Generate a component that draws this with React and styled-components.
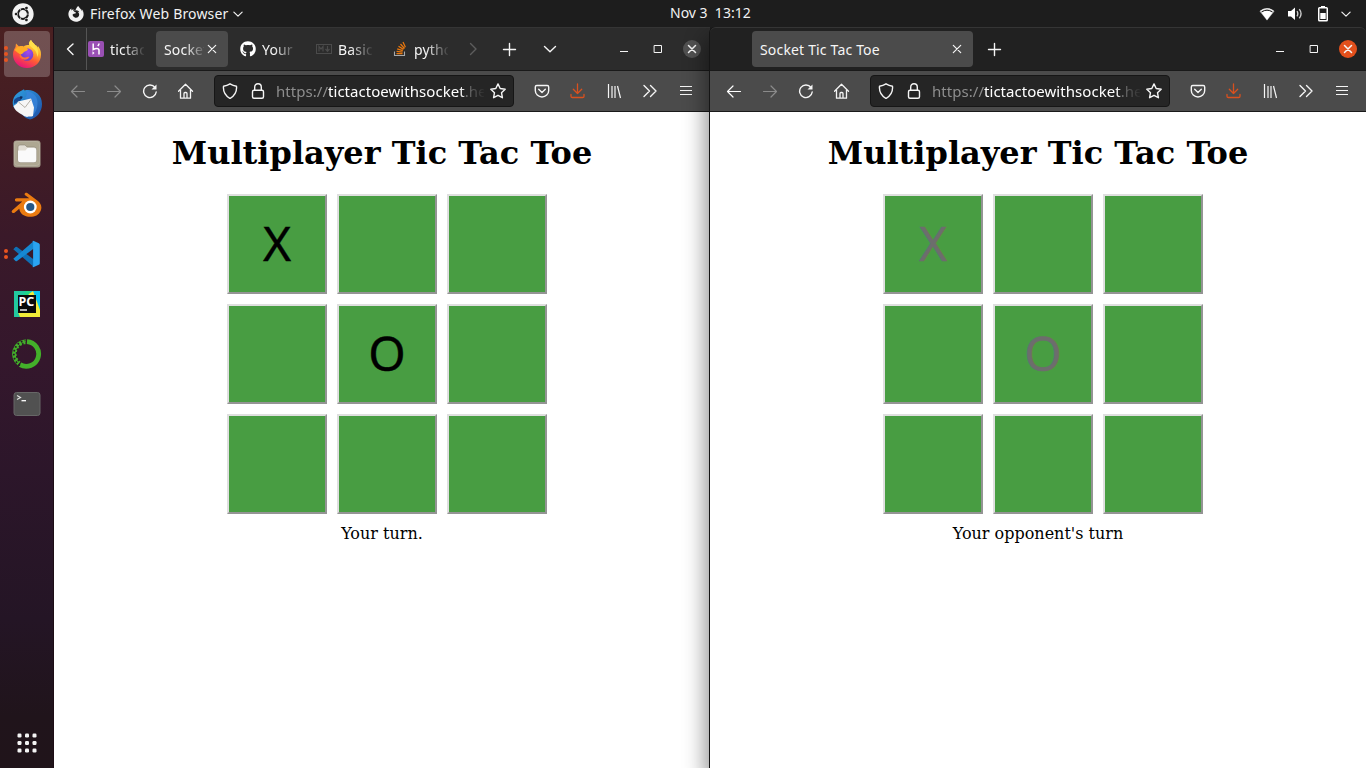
import React from 'react';
import styled, { createGlobalStyle } from 'styled-components';
import { FaGithub, FaUbuntu, FaFirefoxBrowser } from 'react-icons/fa';

const GlobalStyle = createGlobalStyle`
  * { box-sizing: border-box; }
  body { margin: 0; background: #fff; overflow: hidden; }
  svg { display: block; flex: none; }
`;

const ui = '"Noto Sans", "Open Sans", sans-serif';

const Desktop = styled.div`
  width: 1366px;
  height: 768px;
  display: flex;
  flex-direction: column;
  overflow: hidden;
  font-family: ${ui};
  color: #fff;
`;

const TopBar = styled.header`
  height: 27px;
  flex: none;
  display: grid;
  grid-template-columns: 658px auto 1fr;
  align-items: center;
  padding: 0 14px 0 12px;
  background: #1d1d1d;
  color: #f2f2f2;
`;

const TopGroup = styled.div`
  display: flex;
  align-items: center;
  justify-content: ${p => (p.$end ? 'flex-end' : 'flex-start')};
`;

const AppMenu = styled.div`
  display: flex;
  align-items: center;
  margin-left: 34px;
`;

const Label = styled.span`
  font-size: ${p => p.$size || 14}px;
  letter-spacing: ${p => p.$track || 0}px;
  line-height: 20px;
  white-space: pre;
`;

const Clock = styled(Label)`
  margin-top: -2px;
`;

const Gap = styled.span`
  width: ${p => p.$w}px;
  flex: none;
`;

const Main = styled.div`
  flex: 1;
  display: flex;
  min-height: 0;
  background: #1d1d1d;
`;

const Dock = styled.nav`
  width: 54px;
  flex: none;
  display: flex;
  flex-direction: column;
  align-items: center;
  gap: 4px;
  padding: 4px 0 2px;
  border-right: 1px solid #1c0d15;
  background: linear-gradient(180deg, #4a2021 0%, #441d23 12%, #3a1929 28%, #34172c 45%, #2c162a 60%, #241525 80%, #20141b 93%, #20141a 100%);
`;

const DockItem = styled.div`
  position: relative;
  width: 46px;
  height: 46px;
  margin-left: 1px;
  display: flex;
  align-items: center;
  justify-content: center;
  border-radius: 4px;
  background: ${p => (p.$active ? 'rgba(255,255,255,0.22)' : 'transparent')};
  ${p => p.$last && 'margin-top: auto;'}
`;

const RunningDots = styled.div`
  position: absolute;
  left: 0;
  top: 0;
  height: 46px;
  width: 4px;
  display: flex;
  flex-direction: column;
  align-items: center;
  justify-content: center;
  gap: 2px;

  i {
    width: 4px;
    height: 4px;
    border-radius: 50%;
    background: #e95420;
  }
`;

const Window = styled.section`
  width: 656px;
  flex: none;
  display: flex;
  flex-direction: column;
  background: ${p => (p.$front ? 'transparent' : '#fff')};
  position: relative;
  ${p => p.$front && 'border-radius: 6px 6px 0 0; box-shadow: -1px 0 0 #151515, -2px 12px 22px 2px rgba(0,0,0,0.45);'}
  clip-path: inset(0 0 0 -40px);
`;

const TabStrip = styled.div`
  height: 44px;
  flex: none;
  display: flex;
  align-items: center;
  background: ${p => (p.$front ? '#212121' : '#2c2c2c')};
  border-top: 1px solid #353535;
  border-bottom: 1px solid #1a1a1a;
  border-radius: ${p => (p.$front ? '6px 6px 0 0' : '0')};
`;

const Slot = styled.div`
  width: ${p => p.$w || 36}px;
  height: 30px;
  flex: none;
  display: flex;
  align-items: center;
  justify-content: center;
  color: ${p => p.$color || '#f5f5f5'};
`;

const TabList = styled.div`
  width: ${p => p.$w}px;
  height: 100%;
  flex: none;
  display: flex;
  align-items: center;
  overflow: hidden;
  border-left: ${p => (p.$scrolled ? '1px solid #555' : 'none')};
`;

const Tab = styled.div`
  width: ${p => p.$w || 72}px;
  height: 36px;
  margin-right: 4px;
  margin-left: ${p => (p.$cut ? -7 : 0)}px;
  padding: 0 8px;
  flex: none;
  display: flex;
  align-items: center;
  border-radius: 4px;
  background: ${p => (p.$active ? '#4b4b4b' : 'transparent')};
`;

const TabIcon = styled.span`
  width: 16px;
  height: 16px;
  margin-right: 6px;
  flex: none;
  display: flex;
  align-items: center;
  justify-content: center;
`;

const TabText = styled.span`
  flex: 1;
  min-width: 0;
  white-space: nowrap;
  font-size: 14px;
  line-height: 22px;
  padding-top: 2px;
  letter-spacing: 0.17px;
  color: #f6f6f6;
  ${p => p.$fade && `mask-image: linear-gradient(90deg, #000 ${p.$fade}, transparent 105%);`}
`;

const Controls = styled.div`
  display: flex;
  margin-left: auto;
  margin-right: 1px;
`;

const CloseButton = styled.div`
  width: 18px;
  height: 18px;
  border-radius: 50%;
  display: flex;
  align-items: center;
  justify-content: center;
  background: ${p => (p.$front ? '#e2501c' : '#515151')};
`;

const Toolbar = styled.div`
  height: 41px;
  flex: none;
  display: flex;
  align-items: center;
  padding: 0 6px;
  background: #4b4b4b;
  border-bottom: 1px solid #1a1a1a;
`;

const UrlBar = styled.div`
  width: 300px;
  height: 32px;
  margin: 0 10px;
  padding: 0 1px;
  flex: none;
  display: flex;
  align-items: center;
  border: 1px solid #161616;
  border-radius: 4px;
  background: #252525;
`;

const Url = styled.div`
  flex: 1;
  min-width: 0;
  margin-left: 4px;
  white-space: nowrap;
  font-size: 15px;
  line-height: 24px;
  letter-spacing: 0.04px;
  color: #8d8d8d;
  mask-image: linear-gradient(90deg, #000 88%, transparent 101%);

  b {
    font-weight: 400;
    color: #fff;
  }
`;

const Page = styled.main`
  flex: 1;
  display: flex;
  flex-direction: column;
  align-items: center;
  font-family: "DejaVu Serif", serif;
  color: #000;
  background: #fff;
`;

const Title = styled.h1`
  margin: 23px 0 22px;
  font-size: 32px;
  line-height: 37px;
  font-weight: 700;
`;

const Board = styled.div`
  display: grid;
  grid-template-columns: repeat(3, 100px);
  grid-auto-rows: 100px;
  gap: 10px;
  margin-left: 10px;
`;

const Cell = styled.button`
  margin: 0;
  padding: 0 0 2px;
  border: 2px solid;
  border-color: #dfdfdf #949494 #949494 #dfdfdf;
  background: #489d42;
  font: 48px ${ui};
  line-height: 94px;
  color: ${p => (p.$off ? '#6d6d6d' : '#000')};
  -webkit-text-stroke: 0.4px currentColor;
`;

const Status = styled.p`
  margin: 10px 0 0;
  font-size: 16px;
  line-height: 20px;
`;

const Line = ({ d, size = 16, w = 1.4, children, ...rest }) => (
  <svg width={size} height={size} viewBox="0 0 16 16" fill="none" stroke="currentColor" strokeWidth={w} strokeLinecap="round" strokeLinejoin="round" {...rest}>
    {d && <path d={d} />}
    {children}
  </svg>
);

const FirefoxLogo = () => (
  <svg width="30" height="30" viewBox="0 0 30 30">
    <defs>
      <linearGradient id="fx" x1="0.8" y1="0" x2="0.3" y2="1">
        <stop offset="0" stopColor="#fff44f" />
        <stop offset="0.35" stopColor="#ffb02e" />
        <stop offset="0.62" stopColor="#ff5a36" />
        <stop offset="1" stopColor="#e5107e" />
      </linearGradient>
      <radialGradient id="fxc" cx="0.6" cy="0.3" r="0.8">
        <stop offset="0" stopColor="#a64af0" />
        <stop offset="1" stopColor="#5b3fc4" />
      </radialGradient>
    </defs>
    <path fill="url(#fx)" d="M19 1c1 2 3 3.500 4 5 1.500 0 2 1 2.500 2.500l.500-1.500c2 2.500 3 5 3 8.500 0 8-6 13.500-14 13.500S1 23 1 15.500C1 12 2.500 9.500 3.500 8l.500-3.500L7 7.500c2-.700 3.500-.500 4.500 0C13 6 15 6 17 6c-.500-2 .500-4 2-5z" />
    <circle cx="15" cy="15.500" r="6.300" fill="url(#fxc)" />
    <path fill="#ffac26" d="M2.500 11C4.500 8 7 7 9.500 7.500c1.500.300 2.500 1.500 5.500 1.500l1 1.500c-1 1.500-3 1.500-4 2.500-1 1.200-1.500 2-3.500 2.500-2-1-4-3-6-4.500z" />
    <path fill="#ff7139" d="M8.500 14.500c.500 3 3 4.500 5 4 1.500-.500 2.500-1.200 4-.500-1.500 3-7 4-9.500 0-.700-1-.500-2.500.500-3.500z" />
    <path fill="#ffe14a" d="M19 1c1 2 3 3.500 4 5 3.500 4 4 8 2.500 12-.500-4-2-7-5-9-2.500-1.700-5-5-1.500-8z" />
  </svg>
);

const ThunderbirdLogo = () => (
  <svg width="32" height="32" viewBox="0 0 32 32">
    <defs>
      <linearGradient id="tb" x1="0" y1="0" x2="1" y2="1">
        <stop offset="0" stopColor="#2fa0e0" />
        <stop offset="1" stopColor="#1d4fa8" />
      </linearGradient>
    </defs>
    <path fill="url(#tb)" d="M8 4L13 1.200 13.500 2.500C22 .500 31 6 31 16c0 8-5 14-12 15.500L15 30 3 20C.500 15 1.500 8 8 4z" />
    <path fill="#174a92" d="M3 12c2-2.500 5-3.500 9-3.500l-2.500 4L3 16z" />
    <path fill="#3a86dc" d="M15 3c8 1 12 6 11.500 13-.3 5-2 9-5.500 12 1.500-6 2-11-1-15-1.500-2-3-2.500-6-3 2-2 2-4 1-7z" opacity=".75" />
    <path fill="#f6f6f6" d="M2.500 18L6 15.500 7 13.500l13-3 3 9-1 8.500c-2 1-4 0-6 1-2-1-3-.5-5-2.500-4-2-7-4-8.500-8.500z" />
    <path fill="none" stroke="#b5b1a8" strokeWidth="1" d="M7.500 14l6.500 5.500 6-8" />
    <circle cx="10" cy="9.500" r="1.200" fill="#122c55" />
  </svg>
);

const FilesLogo = () => (
  <svg width="28" height="28" viewBox="0 0 28 28">
    <rect x=".5" y=".5" width="27" height="27" rx="3" fill="#a49d8b" />
    <rect x="1.500" y="1.500" width="25" height="24" rx="3" fill="#aea792" stroke="#bdb6a6" strokeWidth=".7" />
    <path d="M5 7q0-2 2-2h5l2 2h7q2.500 0 2.500 2.500V20q0 2.500-2.500 2.500H7Q5 22.500 5 20z" fill="#e3ded5" stroke="#8b8475" strokeWidth=".6" />
    <path d="M5 10.500h7.500L14.500 8H21q2.300 0 2.300 2v10q0 2.300-2.300 2.300H7.500Q5 22.300 5 20z" fill="#fafafa" />
  </svg>
);

const BlenderLogo = () => (
  <svg width="32" height="30" viewBox="0.7 -2.5 32 30">
    <path fill="#ea7b11" d="M14.500 3.500c-.800-1.800 1.300-2.800 2.800-1.700L27 9c3.500 2.700 5 6 3.500 10-1.800 4.700-6 6.300-10.500 6.300-6 0-10.500-3.200-11-8.100L4.500 21C2.500 22.500.200 20.300 2 18.700L12 10H6.500c-2.500 0-2.500-3.200 0-3.200H19z" />
    <circle cx="20" cy="15.500" r="6.400" fill="#fff" />
    <circle cx="20" cy="15.500" r="4.100" fill="#265787" />
  </svg>
);

const CodeLogo = () => (
  <svg width="28" height="28" viewBox="0.7 0 28 28">
    <path fill="#0f6fb5" d="M1 9.200l2.200-2.300q.8-.5 1.500 0L21.500 19.500V27L1 9.200z" />
    <path fill="#1688d2" d="M1 18.800l2.200 2.300q.8.500 1.500 0L21.500 8.500V1L1 18.800z" />
    <path fill="#2aa4f2" d="M19.800 1.200q.7-.7 1.700-.2l5 2.200q1 .5 1 1.500v18.600q0 1-1 1.500l-5 2.200q-1 .4-1.700-.2 1 .3 1-1V2.300q0-1-1-1.100z" />
  </svg>
);

const PyCharmLogo = () => (
  <svg width="28" height="28" viewBox="0 0 28 28">
    <rect x="1" y="1" width="26" height="26" fill="#21d789" />
    <path d="M17 1h10v19L20 8z" fill="#07c3f2" />
    <path d="M1 1h12L4 14l3 13H1z" fill="#22c9a0" />
    <path d="M16 4l4-3 7 19v7H7l-2-5z" fill="#f2ec38" />
    <rect x="5" y="5" width="18" height="18" fill="#0a0a0a" />
    <text x="5.600" y="15.500" style={{ fontFamily: ui, fontWeight: 700, fontSize: 12.5 }} fill="#fff">PC</text>
    <rect x="7" y="19.300" width="7" height="1.400" fill="#fff" />
  </svg>
);

const AnacondaLogo = () => (
  <svg width="32" height="32" viewBox="0.5 0 32 32" fill="none">
    <path d="M16.500 3.600A12.400 12.400 0 1 1 9.500 26.700" stroke="#43b02a" strokeWidth="4.800" />
    <path d="M8.500 25.500A12.300 12.300 0 0 1 15.500 3.600" stroke="#43b02a" strokeWidth="4.600" />
    <path d="M9.500 27.500A13.700 13.700 0 0 1 15 2.500" stroke="#2b1828" strokeWidth="1.800" strokeDasharray="1.700 2.300" />
    <path d="M10 24.500A11.200 11.200 0 0 1 15.500 5" stroke="#2b1828" strokeWidth="1.800" strokeDasharray="1.700 2" strokeDashoffset="1.500" />
  </svg>
);

const TerminalLogo = () => (
  <svg width="28" height="26" viewBox="0 0 28 26">
    <rect x="1" y="1.500" width="26" height="23" rx="2.500" fill="#515151" stroke="#676767" />
    <path d="M4 4.500l3.500 2L4 8.500" fill="none" stroke="#e0e0e0" strokeWidth="1.200" />
    <path d="M8.500 9.700h4.500" stroke="#fff" strokeWidth="1.300" />
  </svg>
);

const AppsGrid = () => (
  <svg width="20" height="20" viewBox="0 0 20 20" fill="#f4f4f4">
    {[2.500, 10, 17.500].map(y => [2.500, 10, 17.500].map(x => (
      <rect key={x + '-' + y} x={x - 2} y={y - 2} width="4" height="4" rx="1.200" />
    )))}
  </svg>
);

const HerokuIcon = () => (
  <svg width="16" height="16" viewBox="0 0 16 16">
    <rect width="16" height="16" rx="2" fill="#9a50b4" />
    <path d="M5.200 2.500v6c2-1 5.800-1.800 5.800.8v4.200M11 2.500c0 1-.5 1.700-1.200 2.500" fill="none" stroke="#fff" strokeWidth="1.500" />
    <path d="M4.500 10.300v3.400l2-1.700z" fill="#fff" />
  </svg>
);

const MarkdownIcon = () => (
  <svg width="16" height="16" viewBox="0 0 16 16" fill="none" stroke="#4b4b4b" strokeWidth="1">
    <rect x=".5" y="3.500" width="15" height="9" />
    <path d="M3 10.500v-5l2 2.500 2-2.500v5M11.500 5v5M9.500 8l2 2.300 2-2.300" strokeWidth="1.200" />
  </svg>
);

const StackIcon = () => (
  <svg width="16" height="16" viewBox="0 0 16 16" fill="none">
    <path d="M2.500 10.500v4h10v-4" stroke="#a6a9ac" strokeWidth="1.100" />
    <path d="M4.500 12.500h6M4.600 10.300l6 .8M5.200 7.800l5.600 1.900M6.500 5.200l5 3.200M8.500 3l4 4.500M11 1l2.400 5.200" stroke="#e8770e" strokeWidth="1.250" />
  </svg>
);

const ChevronDown = ({ size = 16, w = 1.4 }) => <Line size={size} w={w} d="M2.500 5.500L8 10.800l5.500-5.300" />;

const CloseGlyph = () => <Line w={1.2} d="M4.300 4.300l7.400 7.400M11.700 4.300l-7.400 7.400" />;

const WifiIcon = () => (
  <svg width="16" height="16" viewBox="0 0 16 16">
    <path d="M.5 5.200Q8-.500 15.500 5.200L8 14.500z" fill="#aaa" />
    <path d="M2 6Q8 2.700 14 6L8 14z" fill="#fff" />
    <path d="M1.500 5.200Q8 .5 14.500 5.200" fill="none" stroke="#eee" strokeWidth="1.200" />
    <path d="M2.600 6Q8 2.400 13.400 6" fill="none" stroke="#1d1d1d" strokeWidth="1" />
  </svg>
);

const VolumeIcon = () => (
  <svg width="16" height="16" viewBox="0 0 16 16">
    <path d="M1 5h3L8 1.500v12.500L4 10.500H1z" fill="#fff" />
    <path d="M10 5.200Q11.600 7.800 10 10.300M12.300 3.200Q15.800 7.800 12.300 12.300" fill="none" stroke="#ccc" strokeWidth="1.400" />
  </svg>
);

const BatteryIcon = () => (
  <svg width="10" height="16" viewBox="0 0 10 16">
    <rect x="3" y="0" width="4" height="2" fill="#fff" />
    <rect x=".75" y="1.750" width="8.500" height="13" rx=".8" fill="none" stroke="#fff" strokeWidth="1.500" />
    <rect x="2.300" y="7" width="5.400" height="6" fill="#fff" />
  </svg>
);

const dockItems = [
  { logo: FirefoxLogo, dots: 3, active: true },
  { logo: ThunderbirdLogo },
  { logo: FilesLogo },
  { logo: BlenderLogo },
  { logo: CodeLogo, dots: 2 },
  { logo: PyCharmLogo },
  { logo: AnacondaLogo },
  { logo: TerminalLogo },
];

function WindowControls({ front }) {
  return (
    <Controls>
      <Slot $w={34}><Line><path d="M4 10.500h8" strokeWidth="1" strokeLinecap="butt" /></Line></Slot>
      <Slot $w={34}><Line><path d="M4.500 4.500h7v7h-7z" strokeWidth="1" strokeLinejoin="miter" /></Line></Slot>
      <Slot $w={34}>
        <CloseButton $front={front}><Line d="M4.500 4.500l7 7M11.500 4.500l-7 7" w={1.5} /></CloseButton>
      </Slot>
    </Controls>
  );
}

function NavBar({ canGoBack }) {
  return (
    <Toolbar>
      <Slot $color={canGoBack ? '#fff' : '#8b8b8b'}><Line w={1.2} d="M1.500 8.500h13M7 3L1.500 8.500 7 14" /></Slot>
      <Slot $color="#8b8b8b"><Line w={1.2} d="M14.500 8.500h-13M9 3l5.500 5.500L9 14" /></Slot>
      <Slot>
        <Line w={1.4}>
          <path d="M13 4.500A6.300 6.300 0 1 0 14.200 9" />
          <path d="M14.500 1.500v5H9.500z" fill="currentColor" stroke="none" />
        </Line>
      </Slot>
      <Slot><Line w={1.3} d="M.5 8.300l7-7 7 7M2.500 7V15.200h10V7M6 15V10.500q0-1 1-1h1q1 0 1 1V15" /></Slot>
      <UrlBar>
        <Slot $w={28}><Line w={1.4} d="M8 .8Q11 2.700 14.500 3.200 15.300 11 8 15.500 .700 11 1.500 3.200 5 2.700 8 .8z" /></Slot>
        <Slot $w={28}>
          <Line w={1.4}>
            <rect x="2.500" y="7.200" width="11" height="8" rx="1.500" />
            <path d="M4.700 7V4.300Q4.700 .800 8 .800T11.300 4.300V7" />
          </Line>
        </Slot>
        <Url>https://<b>tictactoewithsocket</b>.he</Url>
        <Slot $w={28}><Line w={1.4} d="M8 .9l2.200 4.600 5 .7-3.700 3.500.9 5-4.400-2.400-4.400 2.400.9-5L.8 6.200l5-.7z" /></Slot>
      </UrlBar>
      <Slot><Line w={1.4} d="M2.800 2.500h10.400q1.500 0 1.500 1.500v3.500a6.700 6.500 0 0 1-13.400 0V4q0-1.500 1.500-1.500zM4.700 6.300L8 9.500l3.300-3.200" /></Slot>
      <Slot $color="#d9501e"><Line w={1.3} d="M7.500 .8v9.700M3.300 6.300l4.200 4.200 4.200-4.200M1 11.500v1.700q0 1.300 1.300 1.300h10.400q1.300 0 1.300-1.300v-1.700" /></Slot>
      <Slot><Line w={1.2} strokeLinecap="butt" d="M2.500 1v14M6 3v12M9 3v12M11.500 3L14.500 15" /></Slot>
      <Slot><Line w={1.4} d="M2 2.500L7.500 8 2 13.500M8.500 2.500L14 8l-5.500 5.500" /></Slot>
      <Slot><Line w={1.2} strokeLinecap="butt" d="M2 3.500h12M2 7.500h12M2 11.500h12" /></Slot>
    </Toolbar>
  );
}

function Game({ status, disabled }) {
  const cells = ['X', '', '', '', 'O', '', '', '', ''];
  return (
    <Page>
      <Title>Multiplayer Tic Tac Toe</Title>
      <Board>
        {cells.map((mark, i) => <Cell key={i} $off={disabled}>{mark}</Cell>)}
      </Board>
      <Status>{status}</Status>
    </Page>
  );
}

export default function App() {
  return (
    <Desktop>
      <GlobalStyle />
      <TopBar>
        <TopGroup>
          <FaUbuntu size={22} />
          <AppMenu>
            <FaFirefoxBrowser size={16} />
            <Gap $w={6} />
            <Label $track={0.16}>Firefox Web Browser</Label>
            <Gap $w={4} />
            <ChevronDown size={12} w={1.6} />
          </AppMenu>
        </TopGroup>
        <Clock>Nov 3  13:12</Clock>
        <TopGroup $end>
          <WifiIcon />
          <Gap $w={12} />
          <VolumeIcon />
          <Gap $w={15} />
          <BatteryIcon />
          <Gap $w={12} />
          <ChevronDown size={12} w={1.6} />
        </TopGroup>
      </TopBar>
      <Main>
        <Dock>
          {dockItems.map(({ logo: Logo, dots = 0, active }, i) => (
            <DockItem key={i} $active={active}>
              {dots > 0 && <RunningDots>{Array.from({ length: dots }, (_, n) => <i key={n} />)}</RunningDots>}
              <Logo />
            </DockItem>
          ))}
          <DockItem $last><AppsGrid /></DockItem>
        </Dock>
        <Window>
          <TabStrip>
            <Slot $w={32}><Line d="M11 3L5.500 8l5.500 5.500" /></Slot>
            <TabList $w={374} $scrolled>
              <Tab $cut><TabIcon><HerokuIcon /></TabIcon><TabText $fade="40%">tictac</TabText></Tab>
              <Tab $active>
                <TabText $fade="55%">Socket</TabText>
                <Slot $w={16}><CloseGlyph /></Slot>
              </Tab>
              <Tab><TabIcon><FaGithub size={16} color="#fff" /></TabIcon><TabText $fade="35%">Your</TabText></Tab>
              <Tab><TabIcon><MarkdownIcon /></TabIcon><TabText $fade="35%">Basic</TabText></Tab>
              <Tab><TabIcon><StackIcon /></TabIcon><TabText $fade="35%">pytho</TabText></Tab>
            </TabList>
            <Slot $w={26} $color="#5d5d5d"><Line d="M5.500 2.500L11 8l-5.500 5.500" /></Slot>
            <Slot $w={46}><Line w={1.400} d="M8.500 2.500v12M2.500 8.500h12" /></Slot>
            <Slot $w={36}><ChevronDown /></Slot>
            <WindowControls />
          </TabStrip>
          <NavBar />
          <Game status="Your turn." />
        </Window>
        <Window $front>
          <TabStrip $front>
            <Gap $w={42} />
            <Tab $w={221} $active>
              <TabText>Socket Tic Tac Toe</TabText>
              <Slot $w={16}><CloseGlyph /></Slot>
            </Tab>
            <Slot $w={34}><Line w={1.400} d="M8.500 2.500v12M2.500 8.500h12" /></Slot>
            <WindowControls front />
          </TabStrip>
          <NavBar canGoBack />
          <Game status="Your opponent's turn" disabled />
        </Window>
      </Main>
    </Desktop>
  );
}
